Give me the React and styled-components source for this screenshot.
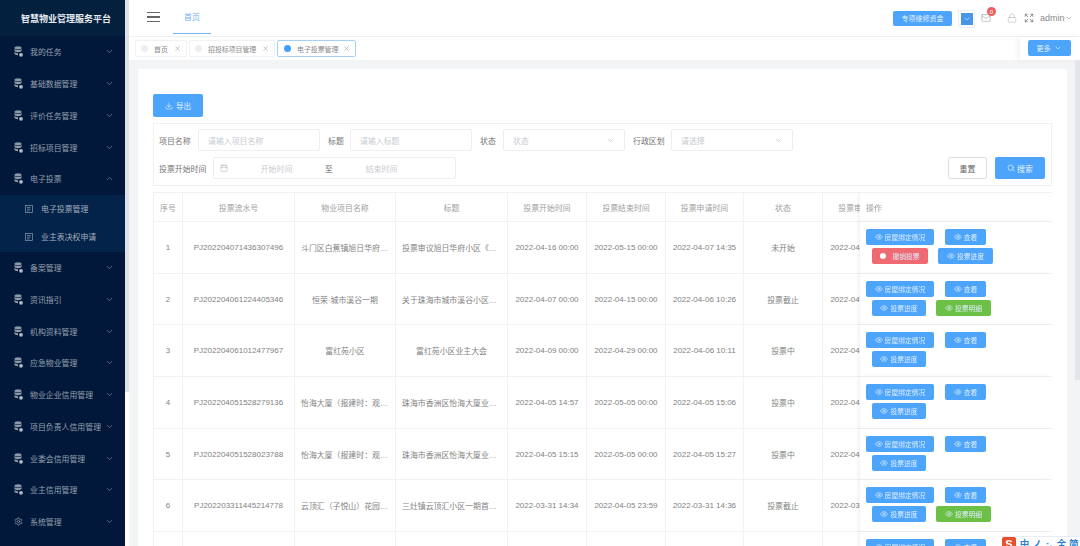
import React from 'react';
import styled, { createGlobalStyle } from 'styled-components';
import { ChevronDown, ChevronUp, Eye, Settings, Download, Mail, Lock, Search, Calendar, X, Expand } from 'lucide-react';

const Global = createGlobalStyle`
  html, body { margin: 0; padding: 0; height: 100%; overflow: hidden; background: #fff; }
  body { font-family: "Liberation Sans", "Noto Sans CJK SC", sans-serif; font-size: 7.9px; color: #808080; }
  #root { filter: blur(0.5px); }
  * { box-sizing: border-box; }
`;

const Shell = styled.div`
  display: flex; width: 1080px; height: 546px; overflow: hidden; position: relative;
`;
const Sidebar = styled.aside`
  width: 125px; flex: none; background: #01183a; display: flex; flex-direction: column;
`;
const Brand = styled.div`
  height: 36px; flex: none; background: #04203f; color: #e6eaef; font-size: 9px; font-weight: 700;
  display: flex; align-items: center; padding-left: 21px; white-space: nowrap;
`;
const MenuRow = styled.div`
  height: 31.75px; flex: none; display: flex; align-items: center; padding: 0 11px 0 14px; color: #95a0ae; white-space: nowrap;
  svg.lead { margin-right: 7px; flex: none; }
  svg.chev { margin-left: auto; flex: none; color: #6f7d90; }
`;
const SubMenu = styled.div`
  background: #03234a; display: flex; flex-direction: column; padding-bottom: 1px;
`;
const SubRow = styled.div`
  height: 28px; display: flex; align-items: center; padding-left: 25px; color: #a3aebb; white-space: nowrap;
  svg { margin-right: 8px; }
`;
const SideScroll = styled.div`
  width: 4px; flex: none; background: #fff;
  &::before { content: ""; display: block; height: 392px; background: #dfe2e6; }
`;
const Content = styled.div`
  flex: 1; min-width: 0; display: flex; flex-direction: column; background: #f3f4f6; position: relative;
`;
const TopBar = styled.header`
  height: 37px; flex: none; background: #fff; border-bottom: 1px solid #eef0f2; display: flex; align-items: flex-start;
`;
const Burger = styled.button`
  border: 0; background: none; padding: 0; margin: 12px 0 0 18px; width: 13px; height: 10px; display: flex;
  flex-direction: column; justify-content: space-between;
  span { display: block; height: 1.2px; background: #666; }
`;
const NavTab = styled.div`
  margin-left: 13px; width: 38px; height: 34px; border-bottom: 1px solid #74b5f6; color: #6fb1f3;
  display: flex; align-items: center; justify-content: center;
`;
const TopRight = styled.div`
  margin-left: auto; height: 36px; display: flex; align-items: center; padding-right: 7px; color: #888;
`;
const SolidBtn = styled.button`
  border: 0; border-radius: 2px; background: #4ca4fb; color: #e4f1ff; font: inherit; font-size: 7px; height: ${p => p.$h || 16}px;
  width: ${p => p.$w}px; padding: 0; display: inline-flex; align-items: center; justify-content: center; white-space: nowrap;
`;
const DropBox = styled.div`
  width: 17px; height: 18px; margin-left: 6px; border: 1px solid #f0f0f0; display: flex; align-items: center; justify-content: center;
  margin-top: 2px;
`;
const DropInner = styled.div`
  width: 12px; height: 12px; background: #4a96e6; display: flex; align-items: center; justify-content: center; color: #dcecff;
`;
const MailWrap = styled.div`
  position: relative; width: 10px; height: 10px; margin-left: 6px; margin-right: 16px; color: #8a8a8a;
`;
const Badge = styled.span`
  position: absolute; left: 6px; top: -6px; width: 9px; height: 9px; border-radius: 50%; background: #ee5f63; color: #fff;
  font-size: 6px; display: flex; align-items: center; justify-content: center;
`;
const Admin = styled.span`
  margin: 0 3px 0 6px; width: 22px; font-size: 9px; color: #8a8a8a;
`;
const TabBar = styled.div`
  height: 23px; flex: none; background: #fff; display: flex; align-items: flex-start; padding: 3px 0 0 6px; gap: 2px; position: relative;
`;
const Tag = styled.div`
  height: 17px; width: ${p => p.$w}px; background: #fff; border: 1px solid ${p => p.$active ? '#a6d0f8' : '#f1f2f4'}; border-radius: 2px;
  display: flex; align-items: center; padding: 0 5px; color: #8a8a8a; white-space: nowrap; font-size: 6.9px;
  svg { margin-left: auto; color: #999; }
`;
const Dot = styled.i`
  width: 7px; height: 7px; border-radius: 50%; background: ${p => p.$active ? '#409eff' : '#eceef0'}; margin-right: 6px; flex: none;
  margin-left: ${p => p.$active ? 1 : 0}px;
`;
const MoreBox = styled.div`
  position: absolute; right: 0; top: 0; height: 23px; width: 60px; background: #fff; box-shadow: -3px 0 6px rgba(0,0,0,.05);
  display: flex; align-items: flex-start; padding: 3px 0 0 8px;
`;
const MainArea = styled.main`
  flex: 1; min-height: 0; padding: 9px 13px 0 9px; overflow: hidden;
`;
const Card = styled.section`
  background: #fff; padding: 25px 15px 0; height: 100%; overflow: hidden;
`;
const ExportBtn = styled(SolidBtn)`
  display: flex; gap: 3px; font-size: 7.5px; svg { flex: none; }
`;
const FilterBox = styled.div`
  margin-top: 6px; height: 63px; border: 1px solid #eff0f2; padding: 5px 6px 0 5px; display: flex; flex-direction: column; gap: 6px;
`;
const FilterRow = styled.div`
  display: flex; align-items: center; gap: 8px; height: 22px;
`;
const Field = styled.div`
  display: flex; align-items: center;
`;
const FieldLabel = styled.label`
  width: ${p => p.$w}px; flex: none; color: #757575; white-space: nowrap;
`;
const TextBox = styled.div`
  width: 122px; height: 22px; border: 1px solid #eceef1; border-radius: 2px; color: #c8cbd0; display: flex;
  align-items: center; padding: 0 9px; svg { margin-left: auto; color: #c0c4cc; }
`;
const DateBox = styled.div`
  width: 243px; height: 22px; border: 1px solid #eceef1; border-radius: 2px; color: #c8cbd0; padding-left: 6px;
  display: grid; grid-template-columns: 13px 87px 18px 87px; align-items: center; text-align: center;
  b { font-weight: 400; color: #666; }
`;
const Actions = styled.div`
  margin-left: auto; display: flex; gap: 8px;
`;
const PlainBtn = styled.button`
  width: 39px; height: 22px; background: #fff; border: 1px solid #dcdfe6; border-radius: 2px; color: #666; font: inherit; padding: 0;
`;
const SearchBtn = styled(SolidBtn)`
  gap: 2px; color: #e8f3ff; font-size: 7.9px;
`;
const TableWrap = styled.div`
  margin-top: 6px; overflow: hidden; border-top: 1px solid #f0f1f3;
`;
const Table = styled.table`
  table-layout: fixed; width: 941px; border-collapse: separate; border-spacing: 0;
`;
const Th = styled.th`
  height: 29px; font-weight: 400; color: #a0a0a0; text-align: ${p => p.$left ? 'left' : 'center'}; padding: 0 ${p => p.$left ? '6px' : '0'};
  border-right: 1px solid #f1f2f4; border-bottom: 1px solid #f1f2f4; white-space: nowrap; overflow: hidden; background: #fff;
  &:first-child { border-left: 1px solid #f1f2f4; }
`;
const Td = styled.td`
  height: 51.7px; text-align: center; color: #828282; border-right: 1px solid #f1f2f4; border-bottom: 1px solid #f1f2f4; padding: 0 6px;
  white-space: nowrap; overflow: hidden; text-overflow: ellipsis; background: #fff;
  &:first-child { border-left: 1px solid #f1f2f4; padding: 0; }
`;
const DateTd = styled(Td)`
  padding: 0; text-overflow: clip; font-size: 8px;
`;
const FixedTh = styled(Th)`
  position: sticky; right: 0; box-shadow: -2px 0 4px rgba(0,0,0,.06); z-index: 1; border-right: 0;
`;
const FixedTd = styled(Td)`
  position: sticky; right: 0; box-shadow: -2px 0 4px rgba(0,0,0,.06); z-index: 1; vertical-align: top; padding: 7px 0 0 6px; border-right: 0;
  overflow: visible; text-align: left;
`;
const BtnLine = styled.div`
  display: flex; gap: ${p => p.$gap}px; margin-left: ${p => p.$indent || 0}px; & + & { margin-top: 3px; }
`;
const OpBtn = styled.button`
  width: ${p => p.$w}px; height: 16px; border: 0; border-radius: 2px; padding: 0; font: inherit; font-size: 6.8px; color: #dcedff;
  background: ${p => ({ green: '#6cc045', red: '#ef6a72' }[p.$tone] || '#4ca4fb')};
  display: inline-flex; align-items: center; justify-content: center; gap: 2px; white-space: nowrap;
`;
const RedDot = styled.i`
  width: 6px; height: 6px; border-radius: 50%; background: #fff; margin-right: 4px;
`;
const Thumb = styled.div`
  position: absolute; right: 0; top: 60px; width: 5px; height: 320px; background: #e4e6e9;
`;
const Ime = styled.div`
  position: absolute; left: 1001px; top: 536px; width: 79px; height: 14px; background: #fff; border-top: 1px solid #e8edf3;
  display: flex; align-items: flex-start; padding-left: 1px; color: #2a7fd4; font-size: 9.5px; font-weight: 700; z-index: 5;
`;
const ImeLogo = styled.span`
  width: 14px; height: 14px; margin-right: 2.500px; background: #e8502a; color: #fff; border-radius: 2px; text-align: center; line-height: 14px; font-size: 11px;
`;
const ImeKey = styled.span`
  width: 12.500px; text-align: center; line-height: 14px;
`;

const DbIcon = () => (
  <svg className="lead" width="9" height="11" viewBox="0 0 9 11" fill="#8d98a5">
    <ellipse cx="4" cy="1.8" rx="3.6" ry="1.6" />
    <path d="M.4 3v1.6c0 .9 1.6 1.6 3.6 1.6s3.6-.7 3.6-1.6V3c-.7.7-2 1.1-3.6 1.1S1.1 3.7.4 3z" />
    <path d="M.4 6v1.6c0 .9 1.6 1.6 3.6 1.6V7.2C2.4 7.2 1.1 6.7.4 6z" />
    <circle cx="7" cy="8.8" r="1.9" fill="#b2bac3" />
  </svg>
);
const DocIcon = () => (
  <svg width="8" height="8" viewBox="0 0 8 8" fill="none" stroke="#8d9cb0" strokeWidth=".7">
    <rect x=".4" y=".4" width="7.2" height="7.2" />
    <path d="M2 2.5h3.500M2 4.200h3.500M2 5.900h2.500" />
  </svg>
);

const Item = ({ children, open, icon }) => (
  <MenuRow>
    {icon || <DbIcon />}
    <span>{children}</span>
    {open ? <ChevronUp className="chev" size={9} /> : <ChevronDown className="chev" size={9} />}
  </MenuRow>
);

const rows = [
  ['1', 'PJ202204071436307496', '斗门区白蕉镇旭日华府小区', '投票审议旭日华府小区《业主大会议事规则》', '2022-04-16 00:00', '2022-05-15 00:00', '2022-04-07 14:35', '未开始', '2022-04-07 14:40', 'a'],
  ['2', 'PJ202204061224405346', '恒荣·城市溪谷一期', '关于珠海市城市溪谷小区业主大会的投票', '2022-04-07 00:00', '2022-04-15 00:00', '2022-04-06 10:26', '投票截止', '2022-04-06 10:40', 'b'],
  ['3', 'PJ202204061012477967', '富红苑小区', '富红苑小区业主大会', '2022-04-09 00:00', '2022-04-29 00:00', '2022-04-06 10:11', '投票中', '2022-04-06 10:20', 'c'],
  ['4', 'PJ202204051528279136', '怡海大厦（报建时：观海大厦）', '珠海市香洲区怡海大厦业主大会会议', '2022-04-05 14:57', '2022-05-05 00:00', '2022-04-05 15:06', '投票中', '2022-04-05 15:10', 'c'],
  ['5', 'PJ202204051528023788', '怡海大厦（报建时：观海大厦）', '珠海市香洲区怡海大厦业主大会会议', '2022-04-05 15:15', '2022-05-05 00:00', '2022-04-05 15:27', '投票中', '2022-04-05 15:30', 'c'],
  ['6', 'PJ202203311445214778', '云顶汇（子悦山）花园一期', '三灶镇云顶汇小区一期首次业主大会', '2022-03-31 14:34', '2022-04-05 23:59', '2022-03-31 14:36', '投票截止', '2022-03-31 14:40', 'b'],
  ['7', '', '', '', '', '', '', '', '', 'c'],
];
const heads = ['序号', '投票流水号', '物业项目名称', '标题', '投票开始时间', '投票结束时间', '投票申请时间', '状态', '投票审核时间'];
const widths = [30, 112, 101, 112, 79, 79, 78, 79, 79, 192];

const Op = ({ w, tone, children, dot }) => (
  <OpBtn $w={w} $tone={tone}>{dot ? <RedDot /> : <Eye size={8} />}{children}</OpBtn>
);

const OpCell = ({ kind }) => (
  <FixedTd>
    <BtnLine $gap={11}><Op w={68}>房屋绑定情况</Op><Op w={41}>查看</Op></BtnLine>
    <BtnLine $gap={10} $indent={6}>
      {kind === 'a' && <><Op w={56} tone="red" dot>撤销投票</Op><Op w={55}>投票进度</Op></>}
      {kind === 'b' && <><Op w={54}>投票进度</Op><Op w={55} tone="green">投票明细</Op></>}
      {kind === 'c' && <Op w={54}>投票进度</Op>}
    </BtnLine>
  </FixedTd>
);

export default function App() {
  return (
    <>
      <Global />
      <Shell>
        <Sidebar>
          <Brand>智慧物业管理服务平台</Brand>
          <Item>我的任务</Item>
          <Item>基础数据管理</Item>
          <Item>评价任务管理</Item>
          <Item>招标项目管理</Item>
          <Item open>电子投票</Item>
          <SubMenu>
            <SubRow><DocIcon />电子投票管理</SubRow>
            <SubRow><DocIcon />业主表决权申请</SubRow>
          </SubMenu>
          <Item>备案管理</Item>
          <Item>资讯指引</Item>
          <Item>机构资料管理</Item>
          <Item>应急物业管理</Item>
          <Item>物业企业信用管理</Item>
          <Item>项目负责人信用管理</Item>
          <Item>业委会信用管理</Item>
          <Item>业主信用管理</Item>
          <Item icon={<Settings className="lead" size={9} color="#8d98a5" />}>系统管理</Item>
        </Sidebar>
        <SideScroll />
        <Content>
          <TopBar>
            <Burger aria-label="菜单"><span /><span /><span /></Burger>
            <NavTab>首页</NavTab>
            <TopRight>
              <SolidBtn $w={59} $h={15}>专项维修资金</SolidBtn>
              <DropBox><DropInner><ChevronDown size={8} /></DropInner></DropBox>
              <MailWrap><Mail size={10} strokeWidth={1.2} /><Badge>0</Badge></MailWrap>
              <Lock size={10} strokeWidth={1.2} color="#aaa" />
              <Expand size={10} strokeWidth={1.6} color="#666" style={{ marginLeft: 7 }} />
              <Admin>admin</Admin>
              <ChevronDown size={8} color="#999" />
            </TopRight>
          </TopBar>
          <TabBar>
            <Tag $w={52}><Dot />首页<X size={7} /></Tag>
            <Tag $w={86}><Dot />招投标项目管理<X size={7} /></Tag>
            <Tag $w={79} $active><Dot $active />电子投票管理<X size={7} /></Tag>
            <MoreBox><SolidBtn $w={43}>更多&nbsp;&nbsp;<ChevronDown size={8} /></SolidBtn></MoreBox>
          </TabBar>
          <MainArea>
            <Card>
              <ExportBtn $w={50} $h={23}><Download size={8} />导出</ExportBtn>
              <FilterBox>
                <FilterRow>
                  <Field><FieldLabel $w={39}>项目名称</FieldLabel><TextBox>请输入项目名称</TextBox></Field>
                  <Field><FieldLabel $w={22}>标题</FieldLabel><TextBox>请输入标题</TextBox></Field>
                  <Field><FieldLabel $w={23}>状态</FieldLabel><TextBox>状态<ChevronDown size={9} /></TextBox></Field>
                  <Field><FieldLabel $w={38}>行政区划</FieldLabel><TextBox>请选择<ChevronDown size={9} /></TextBox></Field>
                </FilterRow>
                <FilterRow>
                  <Field>
                    <FieldLabel $w={54}>投票开始时间</FieldLabel>
                    <DateBox><Calendar size={8} color="#bbb" /><span>开始时间</span><b>至</b><span>结束时间</span></DateBox>
                  </Field>
                  <Actions>
                    <PlainBtn>重置</PlainBtn>
                    <SearchBtn $w={50} $h={22}><Search size={8} />搜索</SearchBtn>
                  </Actions>
                </FilterRow>
              </FilterBox>
              <TableWrap>
                <Table>
                  <colgroup>{widths.map((w, i) => <col key={i} width={w} />)}</colgroup>
                  <thead>
                    <tr>
                      {heads.map(h => <Th key={h}>{h}</Th>)}
                      <FixedTh $left>操作</FixedTh>
                    </tr>
                  </thead>
                  <tbody>
                    {rows.map(r => (
                      <tr key={r[0]}>
                        <Td>{r[0]}</Td>
                        <DateTd>{r[1]}</DateTd>
                        <Td>{r[2]}</Td>
                        <Td>{r[3]}</Td>
                        <DateTd>{r[4]}</DateTd>
                        <DateTd>{r[5]}</DateTd>
                        <DateTd>{r[6]}</DateTd>
                        <Td>{r[7]}</Td>
                        <DateTd>{r[8]}</DateTd>
                        <OpCell kind={r[9]} />
                      </tr>
                    ))}
                  </tbody>
                </Table>
              </TableWrap>
            </Card>
          </MainArea>
          <Thumb />
        </Content>
        <Ime>
          <ImeLogo>S</ImeLogo>
          <ImeKey>中</ImeKey><ImeKey>ノ</ImeKey><ImeKey>·,</ImeKey><ImeKey>全</ImeKey><ImeKey>简</ImeKey>
        </Ime>
      </Shell>
    </>
  );
}
